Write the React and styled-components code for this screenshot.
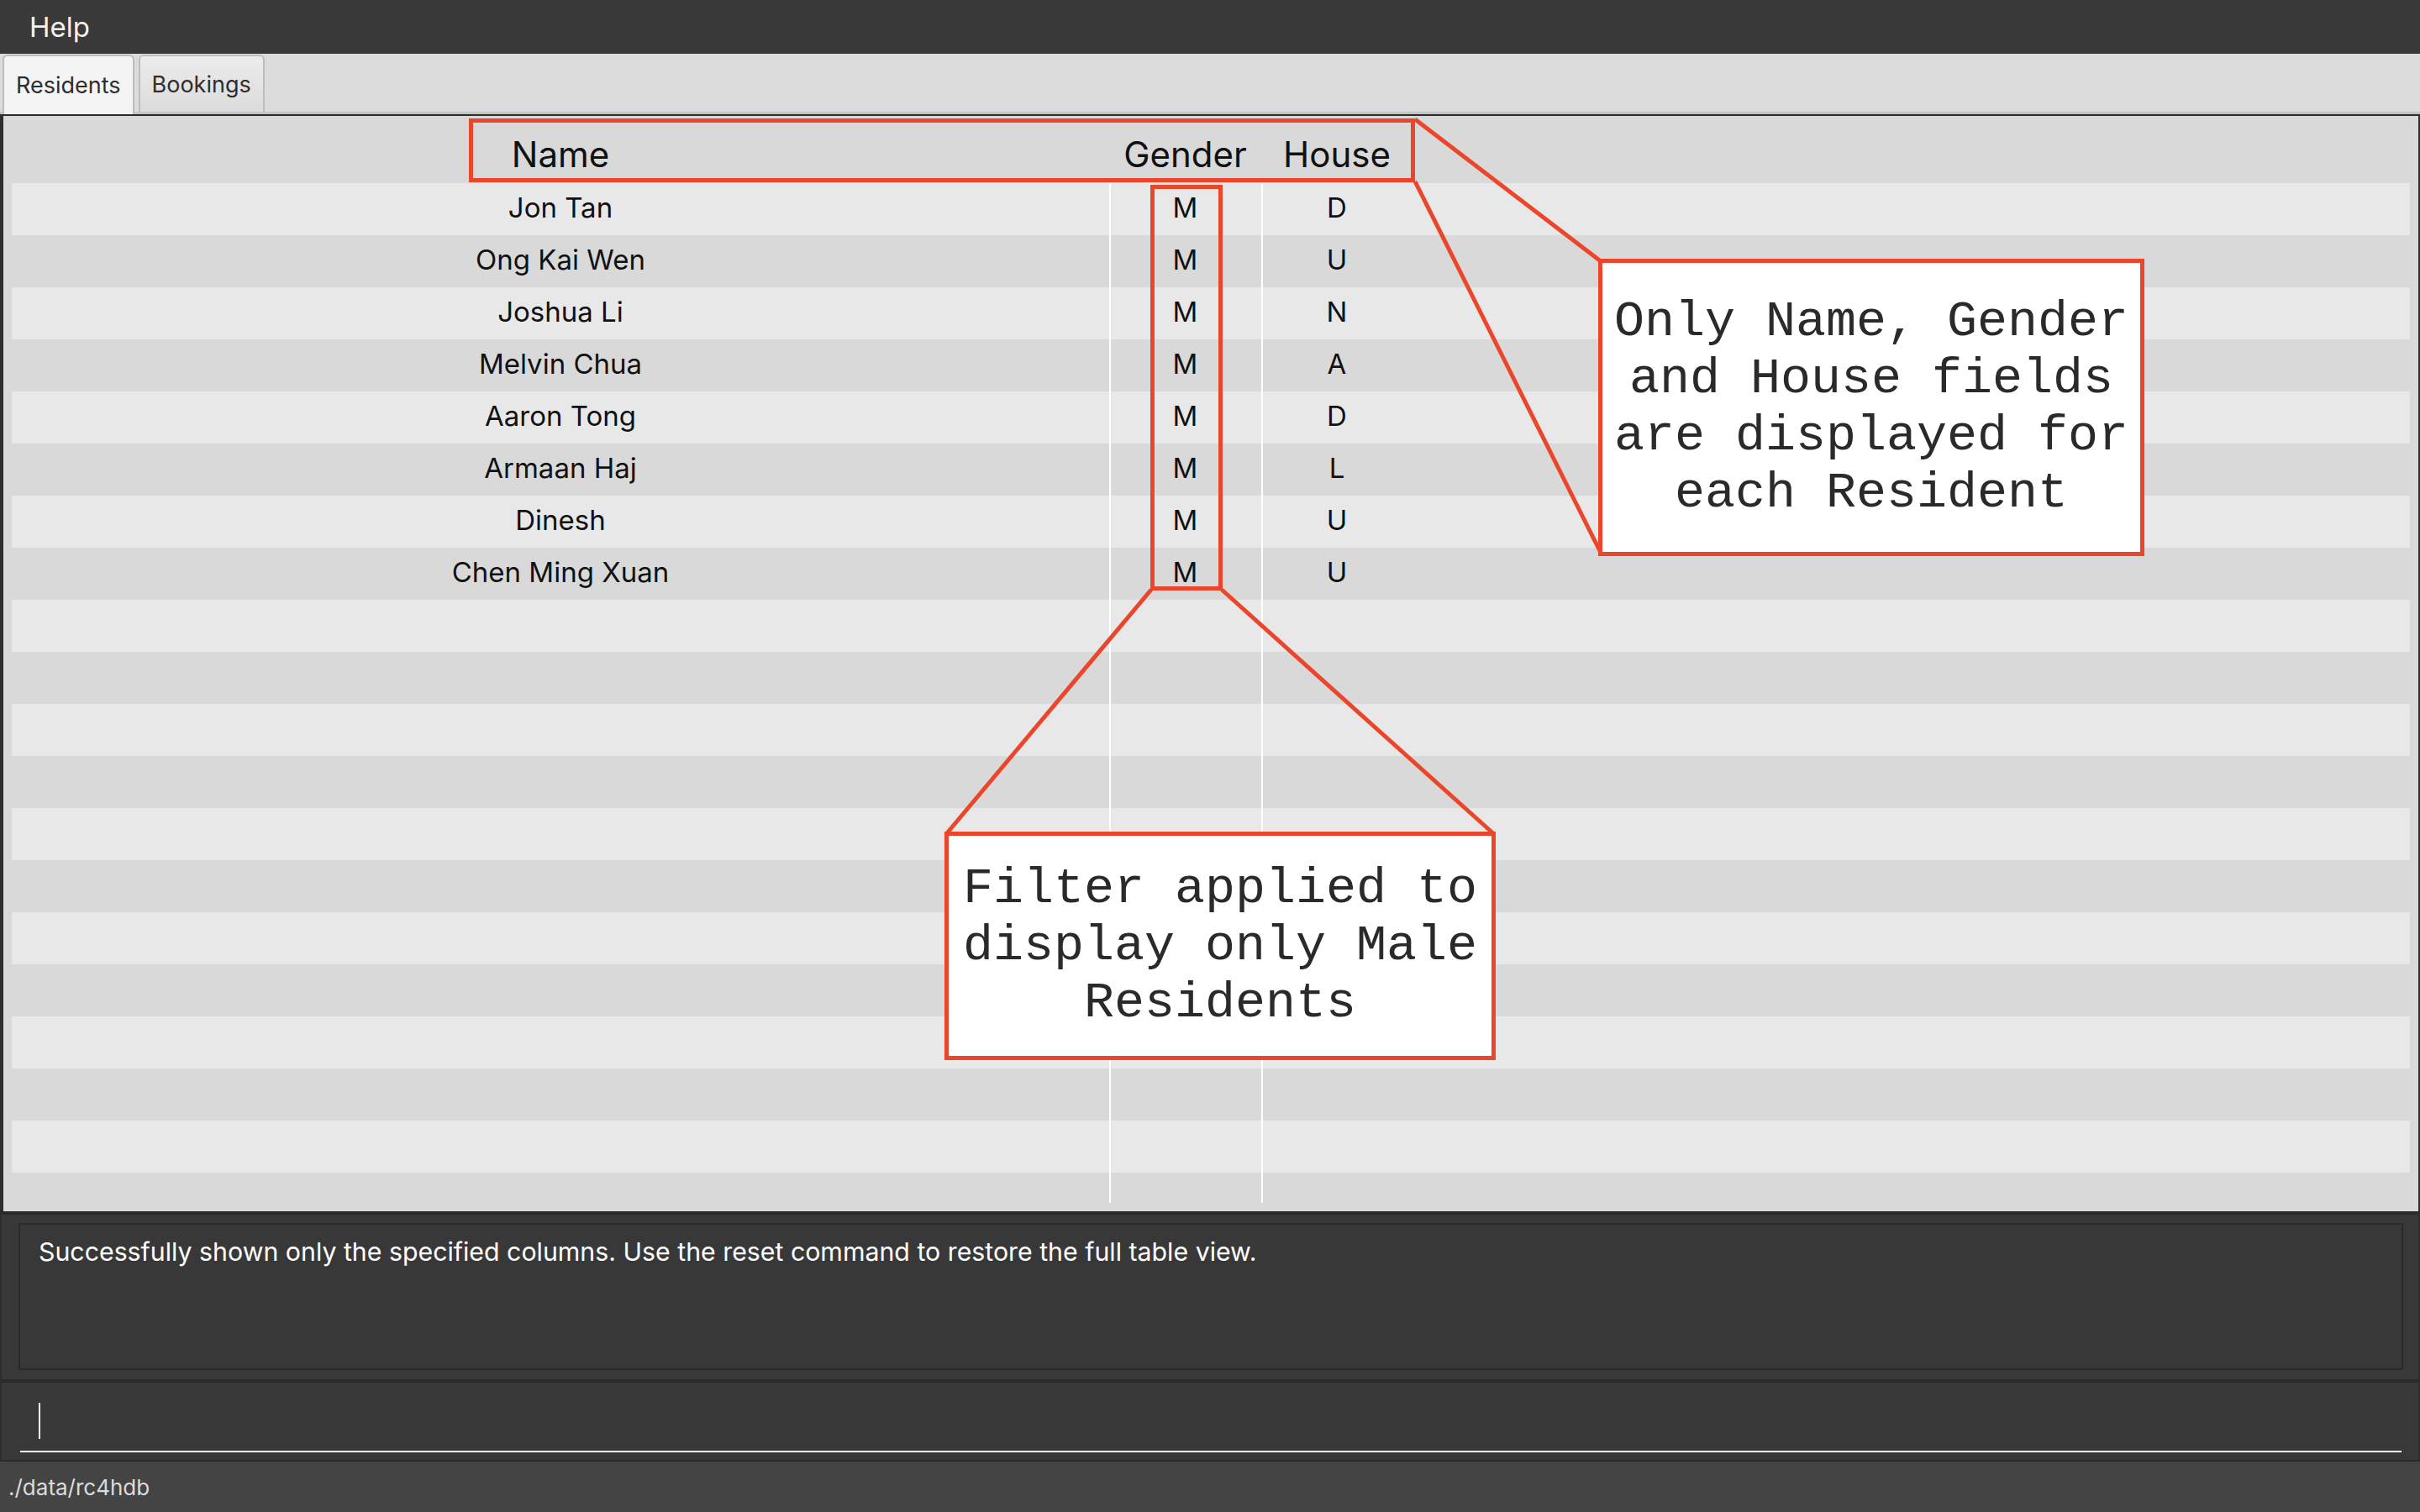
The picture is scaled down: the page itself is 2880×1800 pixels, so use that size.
import React from "react";
import styled, { createGlobalStyle } from "styled-components";

const GlobalStyle = createGlobalStyle`
  html, body { margin: 0; padding: 0; background: #383838; }
  * { box-sizing: border-box; }
`;

const UI_FONT = `Inter, "Liberation Sans", "Noto Sans", sans-serif`;
const RED = "#ea462c";

const Page = styled.div`
  position: relative;
  width: 2880px;
  height: 1800px;
  display: flex;
  flex-direction: column;
  background: #383838;
  font-family: ${UI_FONT};
  overflow: hidden;
`;

const MenuBar = styled.div`
  flex: none;
  height: 64px;
  display: flex;
  align-items: center;
  padding-left: 35px;
  background: #393939;
  color: #f2f2f2;
  font-size: 33px;
`;

const TabStrip = styled.div`
  flex: none;
  height: 72px;
  display: flex;
  align-items: flex-end;
  gap: 5px;
  padding-left: 3px;
  background: #dcdcdc;
  box-shadow: inset 0 -3px 0 #c4c4c4;
`;

const Tab = styled.div`
  height: ${(p) => (p.$active ? 71 : 68)}px;
  margin-bottom: ${(p) => (p.$active ? 0 : 3)}px;
  padding: 0 14px;
  display: flex;
  align-items: center;
  border: 2px solid #bdbdbd;
  border-bottom: none;
  border-radius: 6px 6px 0 0;
  background: ${(p) =>
    p.$active ? "#f4f4f4" : "linear-gradient(#ececec, #dcdcdc)"};
  color: #2e2e2e;
  font-size: 27px;
`;

const TabPane = styled.div`
  flex: none;
  height: 1306px;
  display: flex;
  flex-direction: column;
  border-top: 2px solid #2b2b2b;
  border-left: 4px solid #2e2e2e;
  border-right: 2px solid #2e2e2e;
  background: #d9d9d9;
  padding: 0 10px;
`;

const COLS = "1306px 181px 180px 1fr";

const HeaderRow = styled.div`
  flex: none;
  height: 80px;
  display: grid;
  grid-template-columns: ${COLS};
  align-items: center;
  padding-top: 10px;
`;

const HeaderCell = styled.div`
  text-align: center;
  font-size: 42px;
  color: #111;
`;

const Body = styled.div`
  position: relative;
  flex: none;
  height: 1214px;
`;

const Row = styled.div`
  height: 62px;
  display: grid;
  grid-template-columns: ${COLS};
  align-items: center;
  background: ${(p) => (p.$odd ? "transparent" : "#e8e8e8")};
`;

const Cell = styled.div`
  text-align: center;
  font-size: 33px;
  color: #111;
  padding-bottom: 4px;
`;

const ColumnRule = styled.div`
  position: absolute;
  top: 0;
  bottom: 0;
  left: ${(p) => p.$left}px;
  width: 2px;
  background: #ffffff;
`;

const ResultPanel = styled.div`
  flex: none;
  height: 204px;
  border-top: 4px solid #2a2a2a;
  border-bottom: 4px solid #2a2a2a;
  border-left: 2px solid #2e2e2e;
  border-right: 2px solid #2e2e2e;
  background: #383838;
  padding: 10px 18px 11px 20px;
`;

const ResultBox = styled.div`
  height: 100%;
  border: 2px solid #2a2a2a;
  color: #ffffff;
  font-size: 30.3px;
  padding: 14px 22px;
`;

const CommandPanel = styled.div`
  flex: none;
  height: 94px;
  border-bottom: 2px solid #2a2a2a;
  border-left: 2px solid #2e2e2e;
  border-right: 2px solid #2e2e2e;
  background: #383838;
  padding: 0 20px 0 22px;
`;

const CommandField = styled.div`
  height: 83px;
  border-bottom: 2px solid #ffffff;
  padding: 24px 0 0 22px;
`;

const Caret = styled.div`
  width: 2px;
  height: 43px;
  background: #ffffff;
`;

const StatusBar = styled.div`
  flex: 1;
  display: flex;
  align-items: center;
  padding-left: 10px;
  background: #444444;
  color: #dcdcdc;
  font-size: 26px;
`;

const Overlay = styled.svg`
  position: absolute;
  left: 0;
  top: 0;
  pointer-events: none;
`;

const Callout = styled.div`
  position: absolute;
  left: ${(p) => p.$x}px;
  top: ${(p) => p.$y}px;
  width: ${(p) => p.$w}px;
  height: ${(p) => p.$h}px;
  display: flex;
  align-items: center;
  justify-content: center;
  text-align: center;
  background: #ffffff;
  border: 5px solid ${RED};
  font-family: "Liberation Mono", "DejaVu Sans Mono", monospace;
  font-size: 60px;
  line-height: 68px;
  color: #2a2a2a;
  white-space: pre;
`;

const residents = [
  ["Jon Tan", "M", "D"],
  ["Ong Kai Wen", "M", "U"],
  ["Joshua Li", "M", "N"],
  ["Melvin Chua", "M", "A"],
  ["Aaron Tong", "M", "D"],
  ["Armaan Haj", "M", "L"],
  ["Dinesh", "M", "U"],
  ["Chen Ming Xuan", "M", "U"],
];

const TOTAL_ROWS = 19;

export default function App() {
  const rows = Array.from({ length: TOTAL_ROWS }, (_, i) => residents[i] || ["", "", ""]);
  return (
    <Page>
      <GlobalStyle />
      <MenuBar>Help</MenuBar>
      <TabStrip>
        <Tab $active>Residents</Tab>
        <Tab>Bookings</Tab>
      </TabStrip>
      <TabPane>
        <HeaderRow>
          <HeaderCell>Name</HeaderCell>
          <HeaderCell>Gender</HeaderCell>
          <HeaderCell>House</HeaderCell>
          <HeaderCell />
        </HeaderRow>
        <Body>
          {rows.map((r, i) => (
            <Row key={i} $odd={i % 2 === 1}>
              <Cell>{r[0]}</Cell>
              <Cell>{r[1]}</Cell>
              <Cell>{r[2]}</Cell>
              <Cell />
            </Row>
          ))}
          <ColumnRule $left={1306} />
          <ColumnRule $left={1487} />
        </Body>
      </TabPane>
      <ResultPanel>
        <ResultBox>
          Successfully shown only the specified columns. Use the reset command to restore the full table view.
        </ResultBox>
      </ResultPanel>
      <CommandPanel>
        <CommandField>
          <Caret />
        </CommandField>
      </CommandPanel>
      <StatusBar>./data/rc4hdb</StatusBar>

      <Overlay width="2880" height="1800" viewBox="0 0 2880 1800">
        <g fill="none" stroke={RED} strokeWidth="5" strokeLinejoin="miter">
          <rect x="560.5" y="143.5" width="1121" height="71" />
          <rect x="1371.5" y="222.5" width="81" height="478" />
          <line x1="1684" y1="142" x2="1905" y2="311" />
          <line x1="1684" y1="216" x2="1905" y2="658" />
          <line x1="1370" y1="702" x2="1126" y2="993" />
          <line x1="1454" y1="702" x2="1778" y2="993" />
        </g>
      </Overlay>
      <Callout $x={1902} $y={308} $w={650} $h={354}>
        {"Only Name, Gender\nand House fields\nare displayed for\neach Resident"}
      </Callout>
      <Callout $x={1124} $y={990} $w={656} $h={272}>
        {"Filter applied to\ndisplay only Male\nResidents"}
      </Callout>
    </Page>
  );
}
